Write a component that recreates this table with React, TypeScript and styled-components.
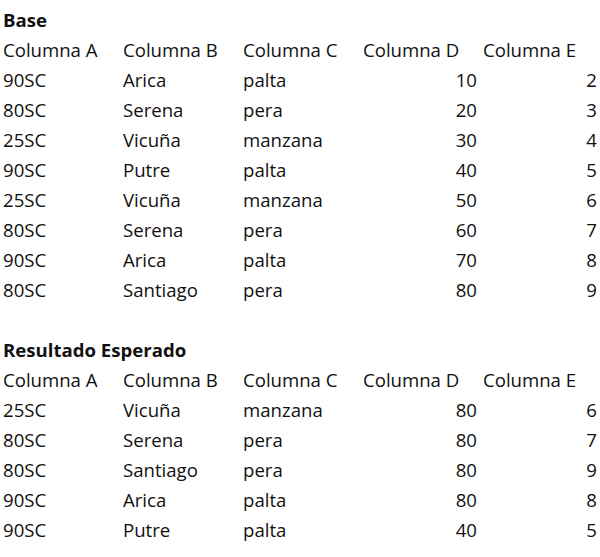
import React from "react";
import styled, { createGlobalStyle } from "styled-components";

const GlobalStyle = createGlobalStyle`
  html, body {
    margin: 0;
    padding: 0;
    background: #ffffff;
  }
`;

const Page = styled.div`
  width: 600px;
  height: 557px;
  padding-top: 5px;
  box-sizing: border-box;
  background: #ffffff;
  color: #111111;
  font-family: "Open Sans", "Noto Sans", sans-serif;
  font-size: 18.6px;
`;

const Sheet = styled.table`
  border-collapse: collapse;
  table-layout: fixed;
  width: 600px;
`;

const Cell = styled.td<{ $num?: boolean; $bold?: boolean }>`
  width: 120px;
  height: 30px;
  padding: 0 3px 0 3px;
  box-sizing: border-box;
  white-space: nowrap;
  line-height: 30px;
  text-align: ${(p) => (p.$num ? "right" : "left")};
  font-weight: ${(p) => (p.$bold ? 700 : 400)};
`;

const headers = ["Columna A", "Columna B", "Columna C", "Columna D", "Columna E"];

type Row = [string, string, string, number, number];

const base: Row[] = [
  ["90SC", "Arica", "palta", 10, 2],
  ["80SC", "Serena", "pera", 20, 3],
  ["25SC", "Vicuña", "manzana", 30, 4],
  ["90SC", "Putre", "palta", 40, 5],
  ["25SC", "Vicuña", "manzana", 50, 6],
  ["80SC", "Serena", "pera", 60, 7],
  ["90SC", "Arica", "palta", 70, 8],
  ["80SC", "Santiago", "pera", 80, 9],
];

const expected: Row[] = [
  ["25SC", "Vicuña", "manzana", 80, 6],
  ["80SC", "Serena", "pera", 80, 7],
  ["80SC", "Santiago", "pera", 80, 9],
  ["90SC", "Arica", "palta", 80, 8],
  ["90SC", "Putre", "palta", 40, 5],
];

const Block = ({ title, rows }: { title: string; rows: Row[] }) => (
  <>
    <tr>
      <Cell $bold colSpan={5}>
        {title}
      </Cell>
    </tr>
    <tr>
      {headers.map((h) => (
        <Cell key={h}>{h}</Cell>
      ))}
    </tr>
    {rows.map((r, i) => (
      <tr key={i}>
        <Cell>{r[0]}</Cell>
        <Cell>{r[1]}</Cell>
        <Cell>{r[2]}</Cell>
        <Cell $num>{r[3]}</Cell>
        <Cell $num>{r[4]}</Cell>
      </tr>
    ))}
  </>
);

export default function App() {
  return (
    <Page>
      <GlobalStyle />
      <Sheet>
        <tbody>
          <Block title="Base" rows={base} />
          <tr>
            <Cell colSpan={5} />
          </tr>
          <Block title="Resultado Esperado" rows={expected} />
        </tbody>
      </Sheet>
    </Page>
  );
}
